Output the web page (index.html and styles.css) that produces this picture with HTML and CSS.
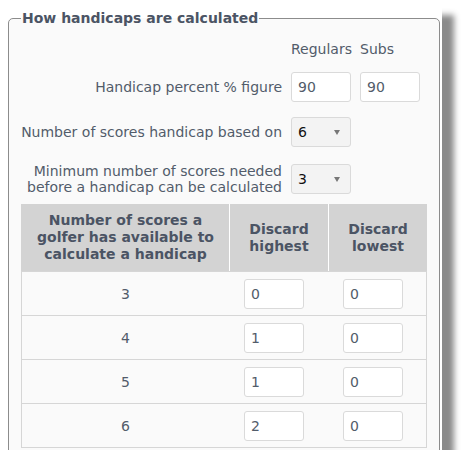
FILE: index.html
```html
<!DOCTYPE html>
<html lang="en">
<head>
  <meta charset="UTF-8">
  <title>How handicaps are calculated</title>
  <link rel="stylesheet" href="styles.css">
</head>
<body>
  <div class="shot">
    <fieldset class="calc">
      <legend>How handicaps are calculated</legend>

      <div class="row heads">
        <span></span>
        <span>Regulars</span>
        <span>Subs</span>
      </div>

      <div class="row first">
        <label>Handicap percent % figure</label>
        <input type="text" value="90">
        <input type="text" value="90">
      </div>

      <div class="row second">
        <label>Number of scores handicap based on</label>
        <span class="pick">
          <select><option>6</option></select>
        </span>
      </div>

      <div class="row third">
        <label>Minimum number of scores needed<br>before a handicap can be calculated</label>
        <span class="pick">
          <select><option>3</option></select>
        </span>
      </div>

      <table class="discards">
        <thead>
          <tr>
            <th class="avail">Number of scores a<br>golfer has available to<br>calculate a handicap</th>
            <th>Discard<br>highest</th>
            <th>Discard<br>lowest</th>
          </tr>
        </thead>
        <tbody>
          <tr><td>3</td><td><input type="text" value="0"></td><td><input type="text" value="0"></td></tr>
          <tr><td>4</td><td><input type="text" value="1"></td><td><input type="text" value="0"></td></tr>
          <tr><td>5</td><td><input type="text" value="1"></td><td><input type="text" value="0"></td></tr>
          <tr><td>6</td><td><input type="text" value="2"></td><td><input type="text" value="0"></td></tr>
        </tbody>
      </table>
    </fieldset>
  </div>
</body>
</html>
```

FILE: styles.css
```css
body {
  margin: 0;
  background: #fff;
  font-family: "DejaVu Sans", Verdana, sans-serif;
  font-size: 14px;
  color: #525c6a;
}

.shot {
  width: 442px;
  height: 450px;
  overflow: hidden;
  background: #fff;
  box-shadow: 12px 15px 6px #8a8a8a;
}

.calc {
  box-sizing: border-box;
  width: 432px;
  margin: 10px 0 0 8px;
  padding: 0 12px 20px;
  border: 1px solid #8c8c8c;
  border-radius: 5px;
  background: #fafafa;
  min-width: 0;
}

.calc legend {
  padding: 0 1px;
  font-weight: bold;
  line-height: 16px;
  color: #4b5464;
}

.row {
  display: grid;
  grid-template-columns: 261px 60px 60px;
  column-gap: 9px;
  align-items: center;
}

.row label {
  text-align: right;
  line-height: 16px;
}

.heads {
  margin-top: 15px;
  line-height: 16px;
}

.first { margin-top: 15px; }
.second { margin-top: 15px; }
.third { margin-top: 16px; }

input,
select {
  box-sizing: border-box;
  width: 60px;
  height: 30px;
  margin: 0;
  padding: 0 6px;
  border: 1px solid #dadada;
  border-radius: 3px;
  background: #fff;
  font-family: inherit;
  font-size: 14px;
  color: #525c6a;
  outline: none;
}

.pick {
  position: relative;
  width: 60px;
  height: 30px;
}

.pick select {
  -webkit-appearance: none;
  appearance: none;
  background: #f3f3f3;
  color: #111;
}

.pick::after {
  content: "";
  position: absolute;
  left: 43px;
  top: 13px;
  border-left: 3.5px solid transparent;
  border-right: 3.5px solid transparent;
  border-top: 5px solid #777;
  pointer-events: none;
}

.discards {
  width: 406px;
  margin-top: 9px;
  border-collapse: separate;
  border-spacing: 0;
  table-layout: fixed;
}

.discards th {
  width: 98px;
  padding: 8px 0;
  background: #d3d3d3;
  border-left: 1px solid #fff;
  font-weight: bold;
  line-height: 17px;
  color: #4b5464;
}

.discards th.avail {
  width: 207px;
  border-left: 1px solid #d3d3d3;
}

.discards td {
  padding: 7px 0 6px 15px;
  border-top: 1px solid #d6d6d6;
  line-height: 30px;
}

.discards td:first-child {
  padding-left: 0;
  text-align: center;
  border-left: 1px solid #d6d6d6;
}

.discards td:last-child {
  border-right: 1px solid #d6d6d6;
}

.discards tr:last-child td {
  border-bottom: 1px solid #d6d6d6;
}

.discards td input {
  display: block;
}
```
